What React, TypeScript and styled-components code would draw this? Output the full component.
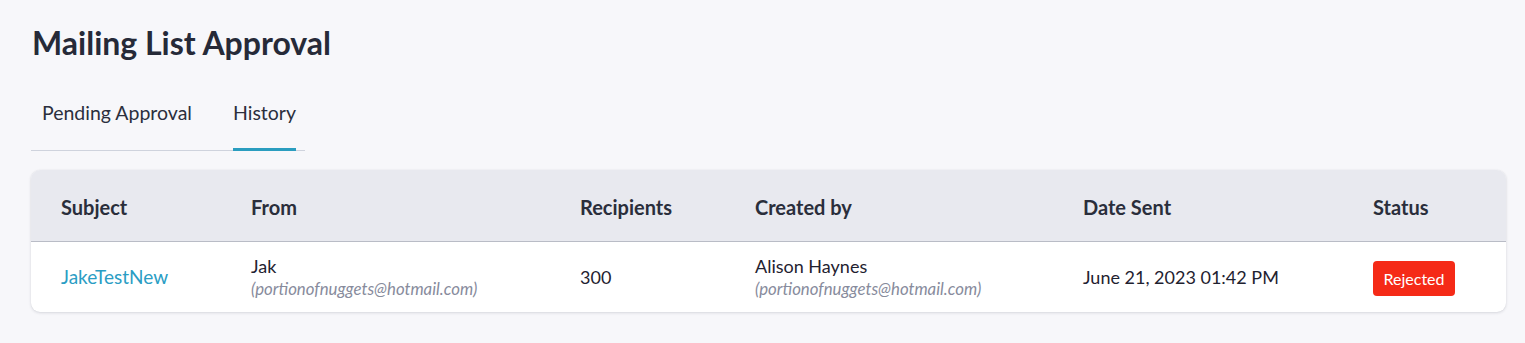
import React from "react";
import styled, { createGlobalStyle } from "styled-components";

const Global = createGlobalStyle`
  html, body { margin: 0; padding: 0; background: #f7f7fa; }
  body { font-family: Lato, "Open Sans", sans-serif; color: #262a38; }
`;

const Page = styled.div`
  padding: 24px 19px 30px 31px;
`;

const Title = styled.h1`
  margin: 0 0 0 1px;
  font-size: 32px;
  font-weight: 700;
  line-height: 38px;
  color: #262a38;
`;

const Tabs = styled.div`
  margin-top: 30px;
  display: inline-flex;
  border-bottom: 1px solid #cfd3dd;
  padding-right: 9px;
`;

const Tab = styled.div<{ $active?: boolean }>`
  font-size: 19.5px;
  line-height: 24px;
  padding: 9px 0 23px;
  margin: 0 ${(p) => (p.$active ? "0" : "41px")} -1px ${(p) => (p.$active ? "0" : "11px")};
  color: #2b2f3d;
  border-bottom: 3px solid ${(p) => (p.$active ? "#2a9dbf" : "transparent")};
`;

const Card = styled.div`
  margin-top: 19px;
  background: #fff;
  border-radius: 9px;
  box-shadow: 0 1px 3px rgba(30, 35, 60, 0.14), 0 0 1px rgba(30, 35, 60, 0.1);
  overflow: hidden;
`;

const cols = "30px 190px 329px 175px 328px 290px 1fr";

const HeadRow = styled.div`
  display: grid;
  grid-template-columns: ${cols};
  height: 71px;
  align-items: center;
  background: #e8e9ef;
  border-bottom: 1px solid #b9bcc6;
`;

const HeadCell = styled.div`
  font-size: 20px;
  font-weight: 700;
  color: #2a2e3b;
  padding-top: 2px;
`;

const BodyRow = styled.div`
  display: grid;
  grid-template-columns: ${cols};
  height: 70px;
  align-items: center;
`;

const Cell = styled.div`
  font-size: 18px;
  line-height: 23px;
  color: #1f2230;
`;

const Link = styled.a`
  color: #2a9dc4;
  text-decoration: none;
  font-size: 19px;
`;

const Email = styled.div`
  font-style: italic;
  font-size: 16.8px;
  line-height: 22px;
  color: #878b9c;
`;

const Badge = styled.span`
  display: inline-flex;
  align-items: center;
  justify-content: center;
  width: 82px;
  height: 35px;
  background: #f52a17;
  color: #fff;
  border-radius: 4px;
  font-size: 16px;
  margin-top: 2px;
`;

const Spacer = styled.div``;

export default function App() {
  return (
    <>
      <Global />
      <Page>
        <Title>Mailing List Approval</Title>
        <Tabs>
          <Tab>Pending Approval</Tab>
          <Tab $active>History</Tab>
        </Tabs>
        <Card>
          <HeadRow>
            <Spacer />
            <HeadCell>Subject</HeadCell>
            <HeadCell>From</HeadCell>
            <HeadCell>Recipients</HeadCell>
            <HeadCell>Created by</HeadCell>
            <HeadCell>Date Sent</HeadCell>
            <HeadCell>Status</HeadCell>
          </HeadRow>
          <BodyRow>
            <Spacer />
            <Cell>
              <Link href="#">JakeTestNew</Link>
            </Cell>
            <Cell>
              Jak
              <Email>(portionofnuggets@hotmail.com)</Email>
            </Cell>
            <Cell>300</Cell>
            <Cell>
              Alison Haynes
              <Email>(portionofnuggets@hotmail.com)</Email>
            </Cell>
            <Cell>June 21, 2023 01:42 PM</Cell>
            <Cell>
              <Badge>Rejected</Badge>
            </Cell>
          </BodyRow>
        </Card>
      </Page>
    </>
  );
}
